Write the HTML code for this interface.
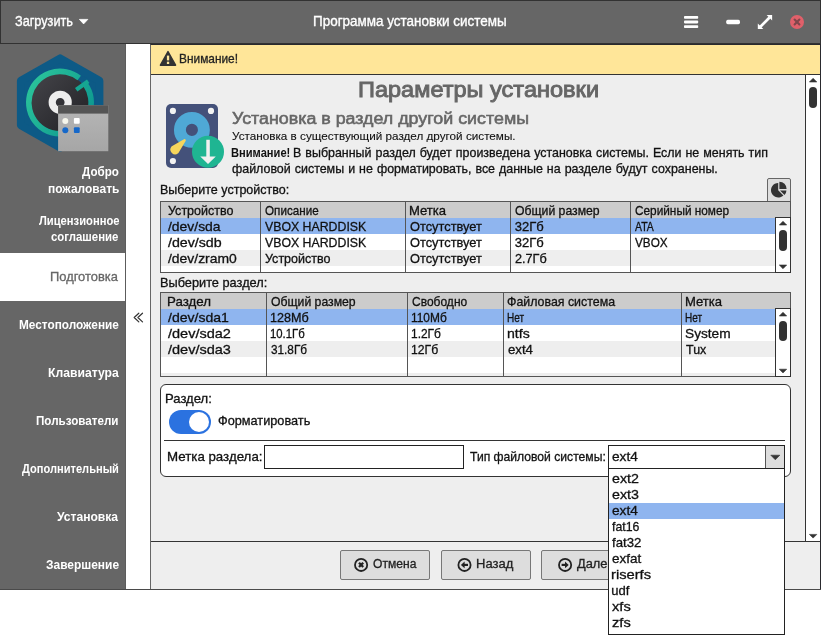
<!DOCTYPE html>
<html lang="ru"><head><meta charset="utf-8"><title>Программа установки системы</title>
<style>
html,body{margin:0;padding:0}
body{width:821px;height:636px;position:relative;overflow:hidden;background:#fff;font-family:"Liberation Sans",sans-serif}
div,span,svg{position:absolute;box-sizing:border-box}
.tl{left:0;top:0;width:821px;height:636px;will-change:transform}
#texts{z-index:5}
#ddtexts{z-index:12}
.t{white-space:pre}
#titlebar{left:0;top:0;width:821px;height:44px;background:#666;border:1px solid #323232}
#sidebar{left:0;top:44px;width:126px;height:545px;background:#666;border-right:1px solid #5c5c5c}
#active{left:0;top:253px;width:125px;height:48px;background:#fff}
#bottomline{left:0;top:589px;width:821px;height:1px;background:#4a4a4a}
#panel{left:150px;top:44px;width:671px;height:546px;background:#eee;border:1px solid #2a2a2e;border-left-color:#666}
#warn{left:151px;top:45px;width:669px;height:30px;background:#ffe699;border-bottom:1px solid #333}
#vscroll{left:805px;top:75px;width:15px;height:466px;background:#fff;border-left:1px solid #333}
#footline{left:151px;top:541px;width:669px;height:1px;background:#333}
.tbl{background:#fff;border:1px solid #555}
.hdr{background:#ccc;height:16px;left:0;right:0;top:0}
.sel{background:#8fb5ef;height:16px;left:0}
.alt{background:#eee;left:0}
.sep{width:1px;top:0;bottom:0;background:#555}
.sb{background:#fff;border:1px solid #333;width:16px}
.thumb{background:#333;border-radius:4px}
.btn{top:550px;width:90px;height:30px;background:#ddd;border:1px solid #777;border-radius:2px}
#group{left:160px;top:384px;width:631px;height:93px;background:#fff;border:1px solid #333;border-radius:6px}
#gline{left:164px;top:440px;width:621px;height:1px;background:#333}
#toggle{left:169px;top:410px;width:42px;height:24px;border-radius:12px;background:#2b72e0}
#knob{left:188.8px;top:411.7px;width:20.5px;height:20.5px;border-radius:50%;background:#fff}
#input{left:264px;top:445px;width:200px;height:24px;background:#fff;border:1px solid #222}
#combo{left:608px;top:445px;width:177px;height:24px;background:#fff;border:1px solid #222}
#cbtn{left:765px;top:446px;width:19px;height:22px;background:#ddd;border-left:1px solid #555}
#drop{left:608px;top:468px;width:177px;height:167px;background:#fff;border:1px solid #222;z-index:10}
#dsel{left:609px;top:503px;width:175px;height:16px;background:#8fb5ef;z-index:10}
#piebtn{left:767px;top:178px;width:24px;height:24px;background:#dedede;border:1px solid #666;border-radius:2px 2px 0 0}

</style></head>
<body>
<div id="titlebar"></div>
<div id="sidebar"></div>
<div id="active"></div>
<div id="panel"></div>
<div id="warn"></div>
<div id="vscroll"></div>
<div id="footline"></div>
<div id="bottomline"></div>

<!-- table 1 -->
<div id="piebtn"></div>
<div class="tbl" style="left:160px;top:201px;width:631px;height:72px">
  <div class="hdr"></div>
  <div class="sel" style="top:16px;width:614px"></div>
  <div class="alt" style="top:48px;height:16px;width:614px"></div>
  <div class="sep" style="left:99px"></div>
  <div class="sep" style="left:244px"></div>
  <div class="sep" style="left:349px"></div>
  <div class="sep" style="left:469px"></div>
</div>
<div class="sb" style="left:775px;top:217px;height:56px"></div>
<div class="thumb" style="left:779px;top:230px;width:8px;height:21px"></div>

<!-- table 2 -->
<div class="tbl" style="left:160px;top:292px;width:631px;height:85px">
  <div class="hdr"></div>
  <div class="sel" style="top:16px;width:614px"></div>
  <div class="alt" style="top:48px;height:16px;width:614px"></div>
  <div class="alt" style="top:80px;height:3px;width:614px"></div>
  <div class="sep" style="left:105px"></div>
  <div class="sep" style="left:246px"></div>
  <div class="sep" style="left:342px"></div>
  <div class="sep" style="left:520px"></div>
</div>
<div class="sb" style="left:775px;top:308px;height:69px"></div>
<div class="thumb" style="left:779px;top:321px;width:8px;height:20px"></div>

<!-- group -->
<div id="group"></div>
<div id="gline"></div>
<div id="toggle"></div><div id="knob"></div>
<div id="input"></div>
<div id="combo"></div><div id="cbtn"></div>

<!-- buttons -->
<div class="btn" style="left:340px"></div>
<div class="btn" style="left:441px"></div>
<div class="btn" style="left:541px"></div>

<!-- main scrollbar thumb -->
<div class="thumb" style="left:809px;top:87px;width:8px;height:21px"></div>

<!-- dropdown -->
<div id="drop"></div>
<div id="dsel"></div>

<svg id="icons" width="821" height="636" viewBox="0 0 821 636" style="left:0;top:0;z-index:4">
<defs>
  <linearGradient id="gDisc" x1="0" y1="0" x2="1" y2="1"><stop offset="0" stop-color="#45454a"/><stop offset="1" stop-color="#202024"/></linearGradient>
  <linearGradient id="gRing" x1="0" y1="0" x2="1" y2="0.6"><stop offset="0" stop-color="#2dc79b"/><stop offset="1" stop-color="#0f9a90"/></linearGradient>
  <linearGradient id="gWin" x1="0" y1="0" x2="0" y2="1"><stop offset="0" stop-color="#b6b6b6"/><stop offset="1" stop-color="#a6a6a6"/></linearGradient>
  <clipPath id="cHdd"><rect x="166" y="104" width="52" height="64" rx="5"/></clipPath>
</defs>
<!-- title bar: dropdown triangle -->
<path d="M79.4 19.4h8.4l-4.2 4.5z" fill="#fff" stroke="#fff" stroke-width="0.8" stroke-linejoin="round"/>
<!-- hamburger -->
<g fill="#fff"><rect x="684" y="16" width="14.2" height="2.8" rx="0.8"/><rect x="684" y="20.6" width="14.2" height="2.8" rx="0.8"/><rect x="684" y="25.2" width="14.2" height="2.8" rx="0.8"/></g>
<!-- minimize -->
<rect x="726.2" y="19.8" width="13.8" height="4.4" rx="1.6" fill="#fff"/>
<!-- maximize -->
<g fill="#fff" stroke="none"><path d="M766.6 14.9h5.5v5.5z"/><path d="M757.8 23.6v5.5h5.5z"/><path d="M768.6 16.6l1.9 1.9-9.2 9.2-1.9-1.9z"/></g>
<!-- close -->
<circle cx="797" cy="22" r="7" fill="#e0606a"/>
<path d="M794.6 19.6l4.8 4.8M799.4 19.6l-4.8 4.8" stroke="#80464b" stroke-width="2.1" stroke-linecap="round"/>
<!-- warning triangle -->
<path d="M168 51.6L175.6 65.2H160.4z" fill="#333" stroke="#333" stroke-width="1.4" stroke-linejoin="round"/>
<rect x="166.9" y="55.6" width="2.3" height="4.8" fill="#ffe699"/><rect x="166.9" y="61.7" width="2.3" height="2.3" fill="#ffe699"/>
<!-- collapse chevrons -->
<path d="M138.8 313.2L134.2 317.5l4.6 4.4M142.5 313.2l-4.6 4.3 4.6 4.4" fill="none" stroke="#333" stroke-width="1.2" stroke-linecap="round" stroke-linejoin="round"/>

<!-- LOGO -->
<path d="M60.15 58.4 L99.4 80.65 V125.15 L60.15 147.4 L20.9 125.15 V80.65 Z" fill="#0d5a86" stroke="#0d5a86" stroke-width="8" stroke-linejoin="round"/>
<circle cx="60" cy="102.6" r="29" fill="url(#gDisc)"/>
<path d="M 79.21 78.01 A 31.2 31.2 0 1 0 85.56 84.70" fill="none" stroke="url(#gRing)" stroke-width="5.6"/>
<path d="M88.2 81.2 L76.2 89.8" stroke="#16a692" stroke-width="4.2" fill="none"/>
<circle cx="60.2" cy="102.3" r="8" fill="none" stroke="#ededed" stroke-width="7.2"/>
<rect x="58.1" y="105.2" width="50.2" height="46" fill="url(#gWin)"/>
<rect x="58.1" y="105.2" width="50.2" height="8.4" fill="#555"/>
<circle cx="65.3" cy="120.9" r="3" fill="#f6f6ec"/>
<rect x="73.9" y="118" width="5.8" height="5.8" rx="1" fill="#fff"/>
<circle cx="65.3" cy="130.2" r="3" fill="#1668c9"/>
<rect x="73.9" y="127.3" width="5.8" height="5.8" rx="1" fill="#1668c9"/>

<!-- HDD icon -->
<rect x="166" y="104" width="52" height="64" rx="5" fill="#44517a"/>
<circle cx="172.9" cy="110.9" r="3.1" fill="#f2f2f2"/><circle cx="211" cy="110.9" r="3.1" fill="#f2f2f2"/><circle cx="172.9" cy="161" r="3.1" fill="#f2f2f2"/>
<circle cx="191.9" cy="129.9" r="12" fill="none" stroke="#4fa9d6" stroke-width="11.9"/>
<path d="M184.6 140.3 L177.4 152.4 A3.6 3.6 0 0 1 172.4 147.3 Z" fill="#f6d55c" stroke="#f6d55c" stroke-width="2.4" stroke-linejoin="round"/>
<circle cx="208" cy="151.8" r="16" fill="#1fb592"/>
<path d="M206.3 139.8h3.5v16.7h6l-7.8 7.6-7.7-7.6h6z" fill="#f0f0f0"/>

<!-- pie icon -->
<g fill="#333">
<path d="M778.2 190.2 V182.9 A7.3 7.3 0 1 0 783.4 195.4 Z"/>
<path d="M779.4 188.9 V181.7 A7.2 7.2 0 0 1 786.6 188.9 Z"/>
<path d="M780 190.4 H786.4 A6.4 6.4 0 0 1 784.5 194.9 Z"/>
</g>

<!-- scroll arrows -->
<g fill="#333" stroke="#333" stroke-width="0.6" stroke-linejoin="round">
<path d="M809.4 82h7.4l-3.7-3.7z"/><path d="M809.4 534.4h7.4l-3.7 3.7z"/>
<path d="M779.3 225h7.4l-3.7-3.7z"/><path d="M779.3 265h7.4l-3.7 3.7z"/>
<path d="M779.3 316h7.4l-3.7-3.7z"/><path d="M779.3 369.2h7.4l-3.7 3.7z"/>
<path d="M770.8 455.2h9l-4.5 4.6z"/>
</g>

<!-- button icons -->
<g fill="none" stroke="#222" stroke-width="1.8">
<circle cx="361.1" cy="564.9" r="6.1"/><circle cx="464.5" cy="564.9" r="6.1"/><circle cx="565.1" cy="564.9" r="6.1"/>
</g>
<path d="M359 562.8l4.2 4.2M363.2 562.8l-4.2 4.2" stroke="#222" stroke-width="2.3" fill="none"/>
<path d="M468 564.9h-4.5" stroke="#222" stroke-width="2.2" fill="none"/><path d="M464.6 561.5v6.8l-3.7-3.4z" fill="#222"/>
<path d="M561.6 564.9h4.5" stroke="#222" stroke-width="2.2" fill="none"/><path d="M565 561.5v6.8l3.7-3.4z" fill="#222"/>
</svg>

<div id="texts" class="tl">
<span class="t" style="left:15.00px;transform-origin:0 0;top:14.1px;font-size:14px;line-height:14px;color:#fff;-webkit-text-stroke:0.35px #fff;transform:scaleX(0.9062)">Загрузить</span>
<span class="t" style="left:313.04px;transform-origin:0 0;top:14.1px;font-size:14px;line-height:14px;color:#fff;-webkit-text-stroke:0.35px #fff;transform:scaleX(0.9615)">Программа установки системы</span>
<span class="t" style="left:179.39px;transform-origin:0 0;top:52.0px;font-size:13px;line-height:13px;color:#222;-webkit-text-stroke:0.3px #222;transform:scaleX(0.9143)">Внимание!</span>
<span class="t" style="left:357.73px;transform-origin:0 0;top:78.9px;font-size:22px;line-height:22px;color:#666;-webkit-text-stroke:0.9px #666;transform:scaleX(1.0704)">Параметры установки</span>
<span class="t" style="left:231.50px;transform-origin:0 0;top:111.2px;font-size:16px;line-height:16px;color:#666;-webkit-text-stroke:0.55px #666;transform:scaleX(1.1147)">Установка в раздел другой системы</span>
<span class="t" style="left:231.50px;transform-origin:0 0;top:130.5px;font-size:11px;line-height:11px;color:#111;-webkit-text-stroke:0.1px #111;transform:scaleX(1.0639)">Установка в существующий раздел другой системы.</span>
<span class="t" style="left:230.64px;transform-origin:0 0;top:146.0px;font-size:13px;line-height:13px;color:#111;font-weight:bold;transform:scaleX(0.8552)">Внимание!</span>
<span class="t" style="left:293.04px;transform-origin:0 0;top:146.0px;font-size:13px;line-height:13px;color:#111;-webkit-text-stroke:0.3px #111;word-spacing:0.6px;transform:scaleX(0.9570)">В выбранный раздел будет произведена установка системы. Если не менять тип</span>
<span class="t" style="left:231.50px;transform-origin:0 0;top:161.7px;font-size:13px;line-height:13px;color:#111;-webkit-text-stroke:0.3px #111;word-spacing:0.6px;transform:scaleX(0.9566)">файловой системы и не форматировать, все данные на разделе будут сохранены.</span>
<span class="t" style="left:159.54px;transform-origin:0 0;top:183.0px;font-size:13px;line-height:13px;color:#111;-webkit-text-stroke:0.3px #111;transform:scaleX(0.9624)">Выберите устройство:</span>
<span class="t" style="left:159.52px;transform-origin:0 0;top:275.8px;font-size:13px;line-height:13px;color:#111;-webkit-text-stroke:0.3px #111;transform:scaleX(0.9815)">Выберите раздел:</span>
<span class="t" style="left:167.60px;transform-origin:0 0;top:204.0px;font-size:13px;line-height:13px;color:#111;-webkit-text-stroke:0.3px #111;transform:scaleX(0.9632)">Устройство</span>
<span class="t" style="left:265.10px;transform-origin:0 0;top:204.0px;font-size:13px;line-height:13px;color:#111;-webkit-text-stroke:0.3px #111;transform:scaleX(0.8967)">Описание</span>
<span class="t" style="left:408.99px;transform-origin:0 0;top:204.0px;font-size:13px;line-height:13px;color:#111;-webkit-text-stroke:0.3px #111;transform:scaleX(1.0056)">Метка</span>
<span class="t" style="left:514.80px;transform-origin:0 0;top:204.0px;font-size:13px;line-height:13px;color:#111;-webkit-text-stroke:0.3px #111;transform:scaleX(0.9400)">Общий размер</span>
<span class="t" style="left:635.00px;transform-origin:0 0;top:204.0px;font-size:13px;line-height:13px;color:#111;-webkit-text-stroke:0.3px #111;transform:scaleX(0.9087)">Серийный номер</span>
<span class="t" style="left:167.60px;transform-origin:0 0;top:220.0px;font-size:13px;line-height:13px;color:#111;-webkit-text-stroke:0.3px #111;transform:scaleX(1.0700)">/dev/sda</span>
<span class="t" style="left:265.10px;transform-origin:0 0;top:220.0px;font-size:13px;line-height:13px;color:#111;-webkit-text-stroke:0.3px #111;transform:scaleX(0.9467)">VBOX HARDDISK</span>
<span class="t" style="left:410.00px;transform-origin:0 0;top:220.0px;font-size:13px;line-height:13px;color:#111;-webkit-text-stroke:0.3px #111;transform:scaleX(0.9863)">Отсутствует</span>
<span class="t" style="left:514.80px;transform-origin:0 0;top:220.0px;font-size:13px;line-height:13px;color:#111;-webkit-text-stroke:0.3px #111;transform:scaleX(1.0000)">32Гб</span>
<span class="t" style="left:635.00px;transform-origin:0 0;top:220.0px;font-size:13px;line-height:13px;color:#111;-webkit-text-stroke:0.3px #111;transform:scaleX(0.8042)">ATA</span>
<span class="t" style="left:167.60px;transform-origin:0 0;top:236.0px;font-size:13px;line-height:13px;color:#111;-webkit-text-stroke:0.3px #111;transform:scaleX(1.0918)">/dev/sdb</span>
<span class="t" style="left:265.10px;transform-origin:0 0;top:236.0px;font-size:13px;line-height:13px;color:#111;-webkit-text-stroke:0.3px #111;transform:scaleX(0.9467)">VBOX HARDDISK</span>
<span class="t" style="left:410.00px;transform-origin:0 0;top:236.0px;font-size:13px;line-height:13px;color:#111;-webkit-text-stroke:0.3px #111;transform:scaleX(0.9863)">Отсутствует</span>
<span class="t" style="left:514.80px;transform-origin:0 0;top:236.0px;font-size:13px;line-height:13px;color:#111;-webkit-text-stroke:0.3px #111;transform:scaleX(1.0000)">32Гб</span>
<span class="t" style="left:635.00px;transform-origin:0 0;top:236.0px;font-size:13px;line-height:13px;color:#111;-webkit-text-stroke:0.3px #111;transform:scaleX(0.9028)">VBOX</span>
<span class="t" style="left:167.60px;transform-origin:0 0;top:252.0px;font-size:13px;line-height:13px;color:#111;-webkit-text-stroke:0.3px #111;transform:scaleX(1.0703)">/dev/zram0</span>
<span class="t" style="left:265.10px;transform-origin:0 0;top:252.0px;font-size:13px;line-height:13px;color:#111;-webkit-text-stroke:0.3px #111;transform:scaleX(0.9632)">Устройство</span>
<span class="t" style="left:410.00px;transform-origin:0 0;top:252.0px;font-size:13px;line-height:13px;color:#111;-webkit-text-stroke:0.3px #111;transform:scaleX(0.9863)">Отсутствует</span>
<span class="t" style="left:514.80px;transform-origin:0 0;top:252.0px;font-size:13px;line-height:13px;color:#111;-webkit-text-stroke:0.3px #111;transform:scaleX(0.9750)">2.7Гб</span>
<span class="t" style="left:166.58px;transform-origin:0 0;top:295.0px;font-size:13px;line-height:13px;color:#111;-webkit-text-stroke:0.3px #111;transform:scaleX(1.0238)">Раздел</span>
<span class="t" style="left:271.00px;transform-origin:0 0;top:295.0px;font-size:13px;line-height:13px;color:#111;-webkit-text-stroke:0.3px #111;transform:scaleX(0.9400)">Общий размер</span>
<span class="t" style="left:412.40px;transform-origin:0 0;top:295.0px;font-size:13px;line-height:13px;color:#111;-webkit-text-stroke:0.3px #111;transform:scaleX(0.9233)">Свободно</span>
<span class="t" style="left:507.05px;transform-origin:0 0;top:295.0px;font-size:13px;line-height:13px;color:#111;-webkit-text-stroke:0.3px #111;transform:scaleX(0.9522)">Файловая система</span>
<span class="t" style="left:684.69px;transform-origin:0 0;top:295.0px;font-size:13px;line-height:13px;color:#111;-webkit-text-stroke:0.3px #111;transform:scaleX(1.0056)">Метка</span>
<span class="t" style="left:167.60px;transform-origin:0 0;top:311.0px;font-size:13px;line-height:13px;color:#111;-webkit-text-stroke:0.3px #111;transform:scaleX(1.0804)">/dev/sda1</span>
<span class="t" style="left:270.03px;transform-origin:0 0;top:311.0px;font-size:13px;line-height:13px;color:#111;-webkit-text-stroke:0.3px #111;transform:scaleX(0.9692)">128Мб</span>
<span class="t" style="left:411.48px;transform-origin:0 0;top:311.0px;font-size:13px;line-height:13px;color:#111;-webkit-text-stroke:0.3px #111;transform:scaleX(0.9158)">110Мб</span>
<span class="t" style="left:507.23px;transform-origin:0 0;top:311.0px;font-size:13px;line-height:13px;color:#111;-webkit-text-stroke:0.3px #111;transform:scaleX(0.7714)">Нет</span>
<span class="t" style="left:684.93px;transform-origin:0 0;top:311.0px;font-size:13px;line-height:13px;color:#111;-webkit-text-stroke:0.3px #111;transform:scaleX(0.7714)">Нет</span>
<span class="t" style="left:167.60px;transform-origin:0 0;top:327.0px;font-size:13px;line-height:13px;color:#111;-webkit-text-stroke:0.3px #111;transform:scaleX(1.1161)">/dev/sda2</span>
<span class="t" style="left:270.13px;transform-origin:0 0;top:327.0px;font-size:13px;line-height:13px;color:#111;-webkit-text-stroke:0.3px #111;transform:scaleX(0.8718)">10.1Гб</span>
<span class="t" style="left:411.48px;transform-origin:0 0;top:327.0px;font-size:13px;line-height:13px;color:#111;-webkit-text-stroke:0.3px #111;transform:scaleX(0.9194)">1.2Гб</span>
<span class="t" style="left:506.92px;transform-origin:0 0;top:327.0px;font-size:13px;line-height:13px;color:#111;-webkit-text-stroke:0.3px #111;transform:scaleX(1.0850)">ntfs</span>
<span class="t" style="left:684.65px;transform-origin:0 0;top:327.0px;font-size:13px;line-height:13px;color:#111;-webkit-text-stroke:0.3px #111;transform:scaleX(1.0524)">System</span>
<span class="t" style="left:167.60px;transform-origin:0 0;top:343.0px;font-size:13px;line-height:13px;color:#111;-webkit-text-stroke:0.3px #111;transform:scaleX(1.1161)">/dev/sda3</span>
<span class="t" style="left:271.00px;transform-origin:0 0;top:343.0px;font-size:13px;line-height:13px;color:#111;-webkit-text-stroke:0.3px #111;transform:scaleX(0.9050)">31.8Гб</span>
<span class="t" style="left:411.46px;transform-origin:0 0;top:343.0px;font-size:13px;line-height:13px;color:#111;-webkit-text-stroke:0.3px #111;transform:scaleX(0.9393)">12Гб</span>
<span class="t" style="left:508.00px;transform-origin:0 0;top:343.0px;font-size:13px;line-height:13px;color:#111;-webkit-text-stroke:0.3px #111;transform:scaleX(1.0160)">ext4</span>
<span class="t" style="left:685.70px;transform-origin:0 0;top:343.0px;font-size:13px;line-height:13px;color:#111;-webkit-text-stroke:0.3px #111;transform:scaleX(0.9571)">Tux</span>
<span class="t" style="left:165.40px;transform-origin:0 0;top:391.8px;font-size:13px;line-height:13px;color:#111;-webkit-text-stroke:0.3px #111;transform:scaleX(1.0044)">Раздел:</span>
<span class="t" style="left:218.22px;transform-origin:0 0;top:413.6px;font-size:13px;line-height:13px;color:#111;-webkit-text-stroke:0.3px #111;transform:scaleX(0.9785)">Форматировать</span>
<span class="t" style="left:166.68px;transform-origin:0 0;top:450.3px;font-size:13px;line-height:13px;color:#111;-webkit-text-stroke:0.3px #111;transform:scaleX(1.0228)">Метка раздела:</span>
<span class="t" style="left:469.60px;transform-origin:0 0;top:450.3px;font-size:13px;line-height:13px;color:#111;-webkit-text-stroke:0.3px #111;transform:scaleX(0.9331)">Тип файловой системы:</span>
<span class="t" style="left:612.20px;transform-origin:0 0;top:450.0px;font-size:13px;line-height:13px;color:#111;-webkit-text-stroke:0.3px #111;transform:scaleX(1.0520)">ext4</span>
<span class="t" style="left:372.60px;transform-origin:0 0;top:558.1px;font-size:12.5px;line-height:12.5px;color:#222;-webkit-text-stroke:0.3px #222;transform:scaleX(0.9667)">Отмена</span>
<span class="t" style="left:475.56px;transform-origin:0 0;top:558.1px;font-size:12.5px;line-height:12.5px;color:#222;-webkit-text-stroke:0.3px #222;transform:scaleX(1.0400)">Назад</span>
<span class="t" style="left:577.00px;transform-origin:0 0;top:558.1px;font-size:12.5px;line-height:12.5px;color:#222;-webkit-text-stroke:0.3px #222;transform:scaleX(1.0270)">Далее</span>
<span class="t" style="left:82.10px;transform-origin:0 0;top:165.3px;font-size:13px;line-height:13px;color:#fff;font-weight:bold;transform:scaleX(0.8927)">Добро</span>
<span class="t" style="left:47.98px;transform-origin:0 0;top:181.5px;font-size:13px;line-height:13px;color:#fff;font-weight:bold;transform:scaleX(0.9184)">пожаловать</span>
<span class="t" style="left:38.60px;transform-origin:0 0;top:213.7px;font-size:13px;line-height:13px;color:#fff;font-weight:bold;transform:scaleX(0.8613)">Лицензионное</span>
<span class="t" style="left:51.20px;transform-origin:0 0;top:229.7px;font-size:13px;line-height:13px;color:#fff;font-weight:bold;transform:scaleX(0.8766)">соглашение</span>
<span class="t" style="left:18.79px;transform-origin:0 0;top:317.8px;font-size:13px;line-height:13px;color:#fff;font-weight:bold;transform:scaleX(0.9083)">Местоположение</span>
<span class="t" style="left:47.56px;transform-origin:0 0;top:365.7px;font-size:13px;line-height:13px;color:#fff;font-weight:bold;transform:scaleX(0.9360)">Клавиатура</span>
<span class="t" style="left:36.41px;transform-origin:0 0;top:413.8px;font-size:13px;line-height:13px;color:#fff;font-weight:bold;transform:scaleX(0.8945)">Пользователи</span>
<span class="t" style="left:22.40px;transform-origin:0 0;top:461.7px;font-size:13px;line-height:13px;color:#fff;font-weight:bold;transform:scaleX(0.8522)">Дополнительный</span>
<span class="t" style="left:57.30px;transform-origin:0 0;top:509.8px;font-size:13px;line-height:13px;color:#fff;font-weight:bold;transform:scaleX(0.9303)">Установка</span>
<span class="t" style="left:46.08px;transform-origin:0 0;top:557.7px;font-size:13px;line-height:13px;color:#fff;font-weight:bold;transform:scaleX(0.9192)">Завершение</span>
<span class="t" style="left:50.21px;transform-origin:0 0;top:270.0px;font-size:13px;line-height:13px;color:#666;-webkit-text-stroke:0.3px #666;transform:scaleX(0.9926)">Подготовка</span>
</div>
<div id="ddtexts" class="tl">
<span class="t dd" style="left:612.20px;transform-origin:0 0;top:472.0px;font-size:13px;line-height:13px;color:#111;-webkit-text-stroke:0.3px #111;transform:scaleX(1.0958)">ext2</span>
<span class="t dd" style="left:612.20px;transform-origin:0 0;top:488.0px;font-size:13px;line-height:13px;color:#111;-webkit-text-stroke:0.3px #111;transform:scaleX(1.0958)">ext3</span>
<span class="t dd" style="left:612.20px;transform-origin:0 0;top:504.0px;font-size:13px;line-height:13px;color:#111;-webkit-text-stroke:0.3px #111;transform:scaleX(1.0520)">ext4</span>
<span class="t dd" style="left:612.20px;transform-origin:0 0;top:520.0px;font-size:13px;line-height:13px;color:#111;-webkit-text-stroke:0.3px #111;transform:scaleX(0.9483)">fat16</span>
<span class="t dd" style="left:612.20px;transform-origin:0 0;top:536.0px;font-size:13px;line-height:13px;color:#111;-webkit-text-stroke:0.3px #111;transform:scaleX(1.0172)">fat32</span>
<span class="t dd" style="left:612.20px;transform-origin:0 0;top:552.0px;font-size:13px;line-height:13px;color:#111;-webkit-text-stroke:0.3px #111;transform:scaleX(1.0357)">exfat</span>
<span class="t dd" style="left:611.07px;transform-origin:0 0;top:568.0px;font-size:13px;line-height:13px;color:#111;-webkit-text-stroke:0.3px #111;transform:scaleX(1.1324)">riserfs</span>
<span class="t dd" style="left:611.20px;transform-origin:0 0;top:584.0px;font-size:13px;line-height:13px;color:#111;-webkit-text-stroke:0.3px #111;transform:scaleX(1.0000)">udf</span>
<span class="t dd" style="left:612.20px;transform-origin:0 0;top:600.0px;font-size:13px;line-height:13px;color:#111;-webkit-text-stroke:0.3px #111;transform:scaleX(1.1250)">xfs</span>
<span class="t dd" style="left:612.20px;transform-origin:0 0;top:616.0px;font-size:13px;line-height:13px;color:#111;-webkit-text-stroke:0.3px #111;transform:scaleX(1.1250)">zfs</span>
</div>
</body></html>
